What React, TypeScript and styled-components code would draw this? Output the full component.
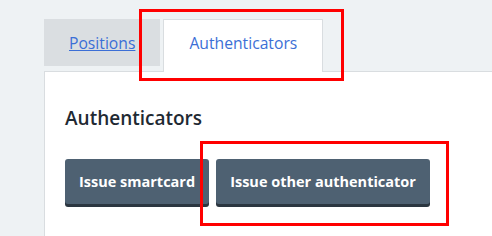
import React from "react";
import styled, { createGlobalStyle } from "styled-components";

const Global = createGlobalStyle`
  html, body { margin: 0; padding: 0; background: #eef2f4; }
  body { font-family: "Open Sans", "Noto Sans", Arial, sans-serif; }
`;

const Page = styled.div`
  position: relative;
  width: 492px;
  height: 236px;
  overflow: hidden;
  padding: 19px 0 0 44px;
  box-sizing: border-box;
  display: flex;
  flex-direction: column;
`;

const Tabs = styled.div`
  display: flex;
  align-items: flex-start;
  gap: 3px;
`;

const Tab = styled.div<{ $active?: boolean }>`
  box-sizing: border-box;
  padding: 0 25px;
  display: flex;
  align-items: center;
  font-size: 15.7px;
  height: ${(p) => (p.$active ? "53px" : "47px")};
  padding-bottom: ${(p) => (p.$active ? "6px" : "0")};
  background: ${(p) => (p.$active ? "#ffffff" : "#dadee1")};
  border: ${(p) => (p.$active ? "1px solid #d9dde0" : "none")};
  border-bottom: none;
  margin-bottom: ${(p) => (p.$active ? "-1px" : "0")};
  position: relative;
  z-index: 1;
  color: #3b6fd6;
  a {
    color: #3b6fd6;
    text-decoration: underline;
  }
`;

const Panel = styled.div`
  flex: 1;
  background: #ffffff;
  border-top: 1px solid #d9dde0;
  border-left: 1px solid #d9dde0;
  padding: 34px 0 0 20px;
`;

const Heading = styled.h2`
  margin: 0;
  font-size: 19px;
  font-weight: 600;
  color: #1f2a33;
  line-height: 24px;
`;

const Buttons = styled.div`
  display: flex;
  gap: 7px;
  margin-top: 29px;
`;

const Button = styled.button`
  font-family: inherit;
  font-size: 14.5px;
  font-weight: 700;
  color: #ffffff;
  background: #4e6172;
  border: none;
  border-radius: 3px;
  height: 45px;
  padding: 0 14px;
  box-shadow: 0 3px 0 #2b3640;
  cursor: pointer;
`;

const Annotation = styled.div<{ $x: number; $y: number; $w: number; $h: number }>`
  position: absolute;
  left: ${(p) => p.$x}px;
  top: ${(p) => p.$y}px;
  width: ${(p) => p.$w}px;
  height: ${(p) => p.$h}px;
  border: 3px solid #ff0000;
  box-sizing: border-box;
  z-index: 5;
  pointer-events: none;
`;

export default function App() {
  return (
    <>
      <Global />
      <Page>
        <Tabs>
          <Tab>
            <a href="#">Positions</a>
          </Tab>
          <Tab $active>Authenticators</Tab>
        </Tabs>
        <Panel>
          <Heading>Authenticators</Heading>
          <Buttons>
            <Button>Issue smartcard</Button>
            <Button>Issue other authenticator</Button>
          </Buttons>
        </Panel>
        <Annotation $x={139} $y={9} $w={205} $h={72} />
        <Annotation $x={200} $y={141} $w={249} $h={85} />
      </Page>
    </>
  );
}
